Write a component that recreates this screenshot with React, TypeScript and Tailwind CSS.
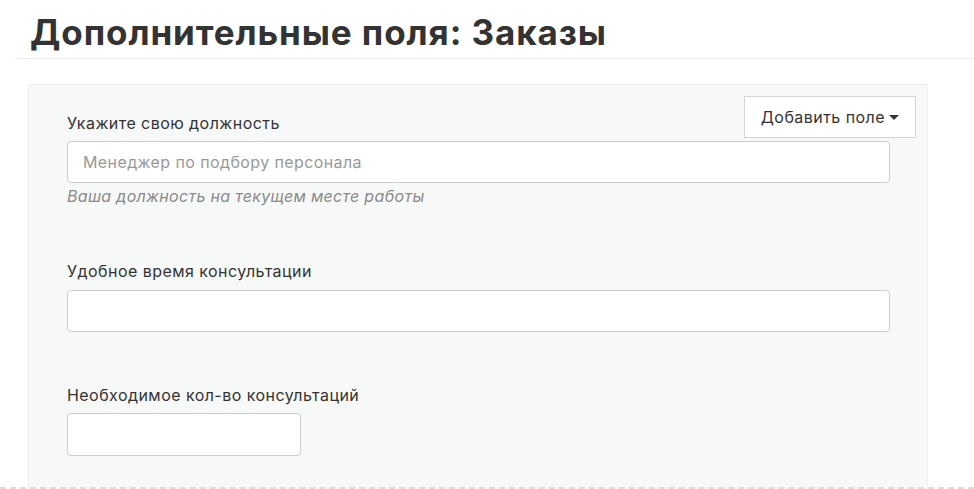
const font = { fontFamily: "Inter, 'Noto Sans', sans-serif" };

const App = () => {
  return (
    <div className="w-[974px] h-[489px] bg-white overflow-hidden relative" style={font}>
      <div className="pl-[15px] pt-[10px] pb-[4px] ml-[15px] border-b border-[#ececec]">
        <h1 className="text-[35px] font-bold text-[#333] leading-[44px] tracking-[0.9px]">
          Дополнительные поля: Заказы
        </h1>
      </div>

      <div className="ml-[28px] mt-[25px] w-[900px] h-[420px] bg-[#f7f8f8] border border-[#eceeee] relative pl-[38px] pr-[37px] pt-[27px] tracking-[0.45px]">
        <button className="absolute top-[11px] right-[11px] h-[42px] px-[16px] bg-white border border-[#d4d4d4] text-[16px] text-[#333] flex items-center gap-[4px] tracking-[0.45px]">
          Добавить поле
          <svg width="10" height="6" viewBox="0 0 10 6" className="mt-[1px]">
            <path d="M0 0h10L5 5z" fill="#333" />
          </svg>
        </button>

        <label className="block text-[16px] text-[#333] leading-[22px]">Укажите свою должность</label>
        <input
          className="mt-[7px] block w-full h-[42px] rounded-[4px] border border-[#cccccc] bg-white px-[15px] text-[16px] tracking-[0.4px] placeholder:text-[#999] outline-none"
          placeholder="Менеджер по подбору персонала"
        />
        <p className="mt-[2px] text-[16px] italic text-[#8a8a8a] leading-[22px] tracking-[0.3px]">Ваша должность на текущем месте работы</p>

        <label className="block mt-[53px] text-[16px] text-[#333] leading-[22px]">Удобное время консультации</label>
        <input className="mt-[8px] block w-full h-[42px] rounded-[4px] border border-[#cccccc] bg-white outline-none" />

        <label className="block mt-[52px] text-[16px] text-[#333] leading-[22px]">Необходимое кол-во консультаций</label>
        <input className="mt-[7px] block w-[234px] h-[43px] rounded-[4px] border border-[#cccccc] bg-white outline-none" />
      </div>

      <div className="absolute left-0 right-0 top-[487px] border-t-2 border-dashed border-[#dddddd]" />
    </div>
  );
};

export default App;
